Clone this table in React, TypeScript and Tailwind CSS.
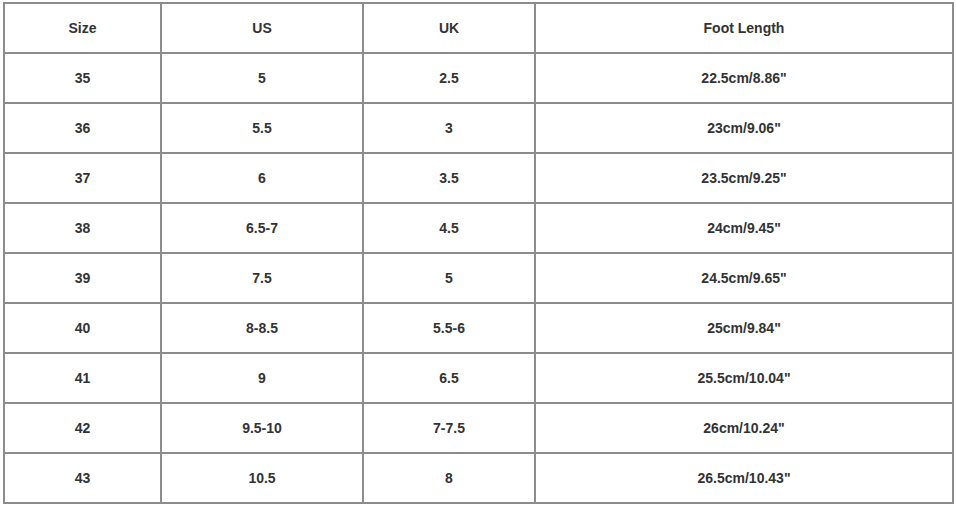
const rows = [
  ['35', '5', '2.5', '22.5cm/8.86"'],
  ['36', '5.5', '3', '23cm/9.06"'],
  ['37', '6', '3.5', '23.5cm/9.25"'],
  ['38', '6.5-7', '4.5', '24cm/9.45"'],
  ['39', '7.5', '5', '24.5cm/9.65"'],
  ['40', '8-8.5', '5.5-6', '25cm/9.84"'],
  ['41', '9', '6.5', '25.5cm/10.04"'],
  ['42', '9.5-10', '7-7.5', '26cm/10.24"'],
  ['43', '10.5', '8', '26.5cm/10.43"'],
];

const cell = 'h-[50px] border-2 border-[#8c8c8c] p-0 text-center align-middle';

export default function App() {
  return (
    <div className="min-h-screen bg-white pl-[3px] pt-[2px] font-['Liberation_Sans',Arial,sans-serif] text-[14px] font-bold text-[#333]">
      <table className="w-[949px] table-fixed border-collapse">
        <colgroup>
          <col className="w-[157px]" />
          <col className="w-[202px]" />
          <col className="w-[172px]" />
          <col className="w-[418px]" />
        </colgroup>
        <thead>
          <tr>
            <th className={cell + ' font-bold'}>Size</th>
            <th className={cell + ' font-bold'}>US</th>
            <th className={cell + ' font-bold'}>UK</th>
            <th className={cell + ' font-bold'}>Foot Length</th>
          </tr>
        </thead>
        <tbody>
          {rows.map((r) => (
            <tr key={r[0]}>
              {r.map((v, i) => (
                <td key={i} className={cell}>
                  {v}
                </td>
              ))}
            </tr>
          ))}
        </tbody>
      </table>
    </div>
  );
}
